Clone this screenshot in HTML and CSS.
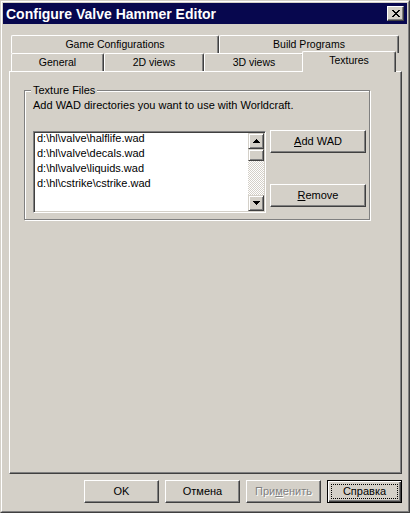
FILE: index.html
```html
<!DOCTYPE html>
<html>
<head>
<meta charset="utf-8">
<title>Configure Valve Hammer Editor</title>
<link rel="stylesheet" href="styles.css">
</head>
<body>
<div class="window">
  <div class="frame">
    <div class="titlebar">
      <span class="title">Configure Valve Hammer Editor</span>
      <button class="close" type="button" aria-label="Close">
        <svg width="8" height="7" viewBox="0 0 8 7" shape-rendering="crispEdges">
          <rect x="0" y="0" width="2" height="1"/><rect x="6" y="0" width="2" height="1"/>
          <rect x="1" y="1" width="2" height="1"/><rect x="5" y="1" width="2" height="1"/>
          <rect x="2" y="2" width="4" height="1"/>
          <rect x="3" y="3" width="2" height="1"/>
          <rect x="2" y="4" width="4" height="1"/>
          <rect x="1" y="5" width="2" height="1"/><rect x="5" y="5" width="2" height="1"/>
          <rect x="0" y="6" width="2" height="1"/><rect x="6" y="6" width="2" height="1"/>
        </svg>
      </button>
    </div>
    <div class="client">
      <div class="tabs">
        <div class="tab-row">
          <div class="tab tab-game">Game Configurations</div>
          <div class="tab tab-build">Build Programs</div>
        </div>
        <div class="tab-row">
          <div class="tab tab-general">General</div>
          <div class="tab tab-2d">2D views</div>
          <div class="tab tab-3d">3D views</div>
          <div class="tab tab-textures tab-selected">Textures</div>
        </div>
      </div>
      <div class="panel">
        <div class="group">
          <span class="group-label">Texture Files</span>
          <div class="group-desc">Add WAD directories you want to use with Worldcraft.</div>
          <div class="group-row">
            <div class="listbox">
              <ul class="list-items">
                <li>d:\hl\valve\halflife.wad</li>
                <li>d:\hl\valve\decals.wad</li>
                <li>d:\hl\valve\liquids.wad</li>
                <li>d:\hl\cstrike\cstrike.wad</li>
              </ul>
              <div class="scrollbar">
                <div class="sb-btn">
                  <svg width="7" height="4" viewBox="0 0 7 4" shape-rendering="crispEdges"><polygon points="3.5,0 7,4 0,4"/></svg>
                </div>
                <div class="sb-thumb"></div>
                <div class="sb-track"></div>
                <div class="sb-btn">
                  <svg width="7" height="4" viewBox="0 0 7 4" shape-rendering="crispEdges"><polygon points="0,0 7,0 3.5,4"/></svg>
                </div>
              </div>
            </div>
            <div class="side-buttons">
              <button class="btn btn-side" type="button"><u>A</u>dd WAD</button>
              <button class="btn btn-side" type="button"><u>R</u>emove</button>
            </div>
          </div>
        </div>
      </div>
      <div class="dialog-buttons">
        <button class="btn btn-dlg" type="button">OK</button>
        <button class="btn btn-dlg" type="button">Отмена</button>
        <button class="btn btn-dlg btn-disabled" type="button">При<u>м</u>енить</button>
        <button class="btn btn-dlg btn-default" type="button"><span class="focus">Справка</span></button>
      </div>
    </div>
  </div>
</div>
</body>
</html>
```
FILE: styles.css
```css
html, body {
  margin: 0;
  padding: 0;
  background: #d4d0c8;
}

body {
  font-family: "Liberation Sans", Arial, sans-serif;
  font-size: 11px;
  color: #000;
}

.window {
  width: 410px;
  height: 513px;
  box-sizing: border-box;
  border: 1px solid;
  border-color: #d4d0c8 #404040 #404040 #d4d0c8;
  background: #d4d0c8;
}

.frame {
  height: 100%;
  box-sizing: border-box;
  border: 1px solid;
  border-color: #fff #808080 #808080 #fff;
  padding: 1px;
  display: flex;
  flex-direction: column;
}

.titlebar {
  height: 21px;
  flex: none;
  background: #07074e;
  color: #fff;
  display: flex;
  justify-content: space-between;
  align-items: flex-start;
}

.title {
  font-weight: bold;
  font-size: 14px;
  line-height: 19px;
  padding: 2px 0 0 3px;
  white-space: nowrap;
}

.close {
  width: 17px;
  height: 15px;
  margin: 3px 3px 0 0;
  padding: 0;
  box-sizing: border-box;
  border: 1px solid;
  border-color: #fff #404040 #404040 #fff;
  box-shadow: inset -1px -1px #808080;
  background: #d4d0c8;
  display: flex;
  align-items: center;
  justify-content: center;
}

.close svg {
  fill: #000;
  display: block;
}

.client {
  flex: 1;
  padding: 11px 5px 7px 6px;
  display: flex;
  flex-direction: column;
}

.tabs {
  padding-left: 2px;
}

.tab-row {
  display: flex;
  height: 18px;
}

.tab {
  flex: none;
  box-sizing: border-box;
  height: 18px;
  border-top: 1px solid #fff;
  border-left: 1px solid #fff;
  border-right: 1px solid #404040;
  box-shadow: inset -1px 0 #808080;
  border-radius: 2px 2px 0 0;
  background: #d4d0c8;
  text-align: center;
  font-size: 10.5px;
  line-height: 17px;
  white-space: nowrap;
}

.tab-game { width: 208px; }
.tab-build { width: 180px; }
.tab-general { width: 93px; }
.tab-2d { width: 100px; }
.tab-3d { width: 100px; }
.tab-textures { width: 94px; }

.tab-selected {
  height: 21px;
  margin: -2px -2px -1px;
  position: relative;
  z-index: 1;
}

.panel {
  flex: none;
  height: 403px;
  box-sizing: border-box;
  border: 1px solid;
  border-color: #fff #404040 #404040 #fff;
  box-shadow: inset -1px -1px #808080;
  padding: 18px 0 0 14px;
}

.group {
  position: relative;
  width: 346px;
  box-sizing: border-box;
  border: 1px solid #808080;
  box-shadow: inset 1px 1px #fff, 1px 1px #fff;
  padding: 8px 3px 6px 8px;
}

.group-label {
  position: absolute;
  top: -7px;
  left: 6px;
  padding: 0 2px;
  line-height: 13px;
  background: #d4d0c8;
  white-space: nowrap;
}

.group-desc {
  line-height: 13px;
  white-space: nowrap;
}

.group-row {
  display: flex;
  align-items: flex-start;
  gap: 4px;
  margin-top: 18px;
}

.listbox {
  margin-top: 1px;
  width: 233px;
  height: 82px;
  box-sizing: border-box;
  border: 1px solid;
  border-color: #808080 #fff #fff #808080;
  box-shadow: inset 1px 1px #404040, inset -1px -1px #d4d0c8;
  padding: 1px;
  background: #fff;
  display: flex;
}

.list-items {
  flex: 1;
  list-style: none;
  margin: 0;
  padding: 0 0 0 2px;
}

.list-items li {
  height: 15px;
  line-height: 11px;
  white-space: nowrap;
}

.scrollbar {
  width: 16px;
  flex: none;
  display: flex;
  flex-direction: column;
}

.sb-btn,
.sb-thumb {
  box-sizing: border-box;
  border: 1px solid;
  border-color: #d4d0c8 #404040 #404040 #d4d0c8;
  box-shadow: inset 1px 1px #fff, inset -1px -1px #808080;
  background: #d4d0c8;
  flex: none;
}

.sb-btn {
  height: 16px;
  display: flex;
  align-items: center;
  justify-content: center;
}

.sb-btn svg {
  display: block;
  fill: #000;
}

.sb-thumb {
  height: 12px;
}

.sb-track {
  flex: 1;
  background-color: #fff;
  background-image: repeating-conic-gradient(#d4d0c8 0 25%, #fff 0 50%);
  background-size: 2px 2px;
}

.side-buttons {
  display: flex;
  flex-direction: column;
  gap: 31px;
}

.btn {
  height: 23px;
  margin: 0;
  padding: 0;
  box-sizing: border-box;
  border: 1px solid;
  border-color: #fff #404040 #404040 #fff;
  box-shadow: inset -1px -1px #808080;
  background: #d4d0c8;
  color: #000;
  font-family: "Liberation Sans", Arial, sans-serif;
  font-size: 11px;
  line-height: 13px;
  text-align: center;
  white-space: nowrap;
}

.btn-side {
  width: 96px;
}

.dialog-buttons {
  display: flex;
  justify-content: flex-end;
  gap: 6px;
  margin-top: 6px;
}

.btn-dlg {
  width: 75px;
}

.btn-disabled {
  color: #808080;
  text-shadow: 1px 1px #fff;
}

.btn-default {
  border-color: #000;
  box-shadow: inset 1px 1px #fff, inset -1px -1px #404040, inset -2px -2px #808080;
}

.focus {
  display: block;
  margin: 3px;
  height: 15px;
  box-sizing: border-box;
  border: 1px dotted #000;
  line-height: 13px;
}
```
